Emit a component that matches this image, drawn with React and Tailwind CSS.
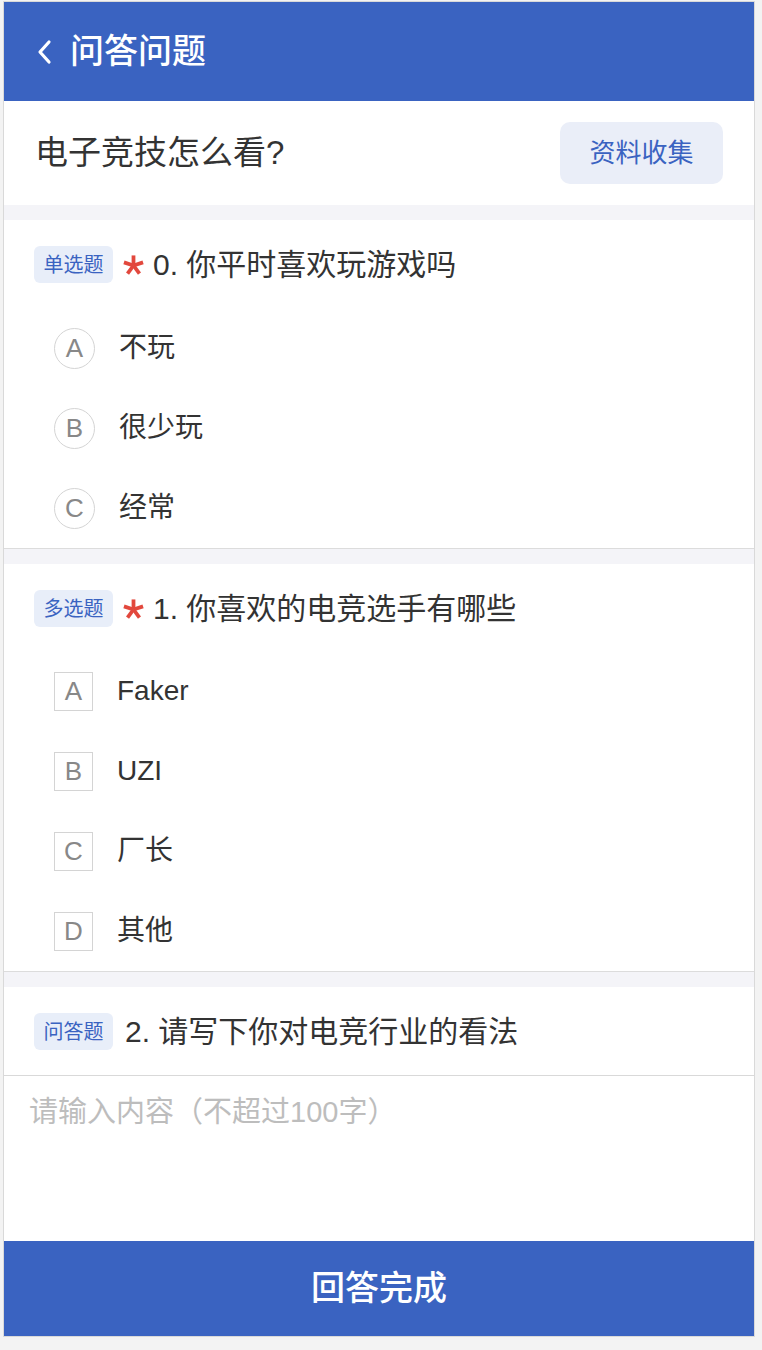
import React from "react";

const FONT = { fontFamily: '"Liberation Sans", "Noto Sans CJK SC", sans-serif' };

const Star = () => (
  <svg width="21" height="21" viewBox="-10 -10 20 20" className="ml-[10px] mr-[9px] mt-[2px] shrink-0">
    <g stroke="#e2483d" strokeWidth="3.6">
      <line x1="0" y1="0" x2="0" y2="-9.6" />
      <line x1="0" y1="0" x2="9.1" y2="-3" />
      <line x1="0" y1="0" x2="5.7" y2="7.8" />
      <line x1="0" y1="0" x2="-5.7" y2="7.8" />
      <line x1="0" y1="0" x2="-9.1" y2="-3" />
    </g>
  </svg>
);

const Tag = ({ children }) => (
  <span className="h-[37px] w-[79px] shrink-0 rounded-[6px] bg-[#e8eef9] text-[#3a63c1] text-[20px] flex items-center justify-center">
    {children}
  </span>
);

const QuestionHead = ({ tag, required, children }) => (
  <div className="flex items-center h-[37px] pl-[30px]">
    <Tag>{tag}</Tag>
    {required ? <Star /> : <span className="w-[12px]" />}
    <span className="text-[30px] text-[#333]">{children}</span>
  </div>
);

const Option = ({ letter, label, square }) => (
  <div className="h-[80px] flex items-center pl-[50px]">
    <span
      className={
        square
          ? "w-[39px] h-[39px] border border-[#d4d4d4] flex items-center justify-center text-[26px] text-[#888]"
          : "w-[41px] h-[41px] rounded-full border border-[#d4d4d4] flex items-center justify-center text-[26px] text-[#888]"
      }
    >
      {letter}
    </span>
    <span className={square ? "ml-[24px] text-[28px] text-[#333]" : "ml-[24px] text-[28px] text-[#333]"}>{label}</span>
  </div>
);

export default function App() {
  return (
    <div className="min-h-[1350px] bg-[#f3f3f3] pt-[1px]" style={FONT}>
      <div className="ml-[3px] w-[752px] border border-[#d9d9d9] bg-[#f4f4f8]">
        {/* header */}
        <div className="h-[99px] bg-[#3a63c1] flex items-center pl-[31px]">
          <svg width="20" height="26" viewBox="0 0 20 26" className="mr-[15px]">
            <polyline points="14,3 5,13 14,23" fill="none" stroke="#fff" strokeWidth="3.2" strokeLinecap="round" strokeLinejoin="round" />
          </svg>
          <span className="text-white text-[34px] font-medium">问答问题</span>
        </div>

        {/* title */}
        <div className="h-[104px] bg-white flex items-center justify-between pl-[31px] pr-[31px]">
          <span className="text-[33px] text-[#333]">电子竞技怎么看?</span>
          <button className="h-[62px] w-[163px] rounded-[10px] bg-[#eaeef8] text-[#3a63c1] text-[26px]">
            资料收集
          </button>
        </div>

        {/* q0 */}
        <div className="mt-[15px] bg-white pt-[26px] border-b border-[#dcdcdc]">
          <QuestionHead tag="单选题" required>0. 你平时喜欢玩游戏吗</QuestionHead>
          <div className="mt-[25px]">
            <Option letter="A" label="不玩" />
            <Option letter="B" label="很少玩" />
            <Option letter="C" label="经常" />
          </div>
        </div>

        {/* q1 */}
        <div className="mt-[15px] bg-white pt-[26px] border-b border-[#dcdcdc]">
          <QuestionHead tag="多选题" required>1. 你喜欢的电竞选手有哪些</QuestionHead>
          <div className="mt-[24px]">
            <Option square letter="A" label="Faker" />
            <Option square letter="B" label="UZI" />
            <Option square letter="C" label="厂长" />
            <Option square letter="D" label="其他" />
          </div>
        </div>

        {/* q2 */}
        <div className="mt-[15px] bg-white pt-[26px]">
          <QuestionHead tag="问答题">2. 请写下你对电竞行业的看法</QuestionHead>
          <textarea
            className="mt-[25px] block w-full h-[166px] resize-none border-t border-[#d9d9d9] px-[25px] py-[15px] text-[29px] text-[#333] placeholder:text-[#bdbdbd] outline-none"
            placeholder="请输入内容（不超过100字）"
          />
        </div>

        {/* submit */}
        <button className="block w-full h-[95px] bg-[#3a63c1] text-white text-[34px] font-medium">
          回答完成
        </button>
      </div>
    </div>
  );
}
